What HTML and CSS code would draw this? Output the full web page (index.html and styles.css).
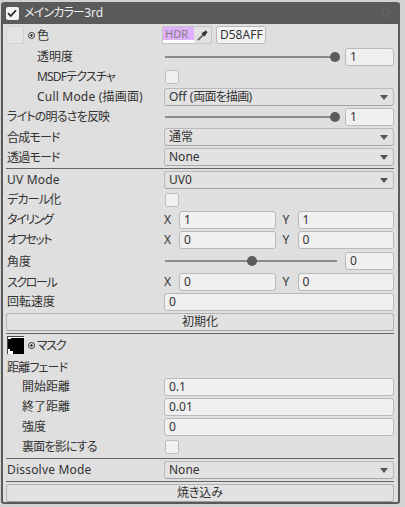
FILE: index.html
```html
<!DOCTYPE html>
<html lang="ja">
<head>
<meta charset="utf-8">
<title>メインカラー3rd</title>
<link rel="stylesheet" href="styles.css">
</head>
<body>
<section class="panel">
  <header class="head">
    <span class="check-on"><svg viewBox="0 0 12 12" width="12" height="12"><path d="M2 6.2 4.8 9 10 3.2" fill="none" stroke="#222" stroke-width="1.7"/></svg></span>
    <span class="head-title"><span class="t1">メインカラー</span>3rd</span>
    <svg class="gear" viewBox="0 0 12 12" width="12" height="12"><circle cx="6" cy="6" r="3.4" fill="none" stroke="#606060" stroke-width="2"/><path d="M6 0v2.4M6 9.6V12M0 6h2.4M9.600 6H12M1.800 1.800l1.700 1.700M8.500 8.500l1.700 1.700M1.800 10.200l1.700-1.700M8.500 3.500l1.700-1.700" stroke="#606060" stroke-width="1.400"/></svg>
  </header>
  <div class="body">
    <div class="row">
      <div class="label tex-label"><span class="swatch"></span><span class="dot"></span><span>色</span></div>
      <div class="ctrl color-ctrl">
        <div class="colorbox">
          <div class="hdr"><span class="hdr-text">HDR</span><span class="hdr-alpha"></span></div>
          <div class="dropper"><svg viewBox="0 0 14 14" width="13" height="13"><path d="M2 12 8 6" stroke="#666" stroke-width="2"/><path d="M7 4 10 7M8.500 5.500l3-3" stroke="#333" stroke-width="3"/></svg></div>
        </div>
        <div class="input hex">D58AFF</div>
      </div>
    </div>
    <div class="row gap-after-color">
      <div class="label ind2 up">透明度</div>
      <div class="ctrl slider"><div class="track"><span class="knob end"></span></div><div class="input num">1</div></div>
    </div>
    <div class="row"><div class="label ind2 up t1">MSDFテクスチャ</div><div class="ctrl"><span class="box"></span></div></div>
    <div class="row"><div class="label ind2 up wide">Cull Mode (描画面)</div><div class="ctrl"><div class="select">Off (<span class="t1">両面を描画</span>)<span class="arrow"></span></div></div></div>
    <div class="row">
      <div class="label up t1">ライトの明るさを反映</div>
      <div class="ctrl slider"><div class="track"><span class="knob end"></span></div><div class="input num">1</div></div>
    </div>
    <div class="row"><div class="label t1">合成モード</div><div class="ctrl"><div class="select">通常<span class="arrow"></span></div></div></div>
    <div class="row"><div class="label t1">透過モード</div><div class="ctrl"><div class="select">None<span class="arrow"></span></div></div></div>
    <hr class="sep">
    <div class="row"><div class="label up wide">UV Mode</div><div class="ctrl"><div class="select">UV0<span class="arrow"></span></div></div></div>
    <div class="row"><div class="label up t1">デカール化</div><div class="ctrl"><span class="box"></span></div></div>
    <div class="row">
      <div class="label up t2">タイリング</div>
      <div class="ctrl xy"><span class="axis">X</span><div class="input grow">1</div><span class="axis y">Y</span><div class="input grow">1</div></div>
    </div>
    <div class="row">
      <div class="label up t2">オフセット</div>
      <div class="ctrl xy"><span class="axis">X</span><div class="input grow">0</div><span class="axis y">Y</span><div class="input grow">0</div></div>
    </div>
    <div class="row extra1">
      <div class="label">角度</div>
      <div class="ctrl slider"><div class="track"><span class="knob mid"></span></div><div class="input num">0</div></div>
    </div>
    <div class="row extra1">
      <div class="label t2">スクロール</div>
      <div class="ctrl xy"><span class="axis">X</span><div class="input grow">0</div><span class="axis y">Y</span><div class="input grow">0</div></div>
    </div>
    <div class="row"><div class="label up">回転速度</div><div class="ctrl"><div class="input grow">0</div></div></div>
    <button class="btn" type="button">初期化</button>
    <hr class="sep">
    <div class="row">
      <div class="label tex-label"><svg class="mask" viewBox="0 0 17 18" width="17" height="18"><rect width="17" height="18" fill="#fff"/><path d="M0 3H4V2H17V18H6V15H3V13H0Z" fill="#000"/><path d="M0 0H17V1H0ZM0 0H1V18H0Z" fill="#444"/></svg><span class="dot"></span><span class="t2">マスク</span></div>
    </div>
    <div class="row extra2"><div class="label t1">距離フェード</div></div>
    <div class="row"><div class="label ind1 up">開始距離</div><div class="ctrl"><div class="input grow">0.1</div></div></div>
    <div class="row"><div class="label ind1 up">終了距離</div><div class="ctrl"><div class="input grow">0.01</div></div></div>
    <div class="row"><div class="label ind1 up">強度</div><div class="ctrl"><div class="input grow">0</div></div></div>
    <div class="row"><div class="label ind1 up t1">裏面を影にする</div><div class="ctrl"><span class="box"></span></div></div>
    <hr class="sep">
    <div class="row"><div class="label up wide">Dissolve Mode</div><div class="ctrl"><div class="select">None<span class="arrow"></span></div></div></div>
    <hr class="sep">
    <button class="btn" type="button">焼き込み</button>
  </div>
</section>
</body>
</html>
```
FILE: styles.css
```css
* { box-sizing: border-box; }
html, body { margin: 0; padding: 0; }
body {
  width: 405px;
  height: 507px;
  background: #d2d2d2;
  padding: 2px 0 0 1px;
  font: 12px/18px "Noto Sans", "Noto Sans CJK JP", sans-serif;
  font-feature-settings: "palt";
  color: #333;
  overflow: hidden;
}
.panel {
  width: 399px;
  height: 502px;
  border: 2px solid #5a5a5a;
  border-top: 0;
  border-radius: 3px;
  background: #dfdfdf;
  display: flex;
  flex-direction: column;
  overflow: hidden;
}
.head {
  height: 22px;
  flex: none;
  background: #5a5a5a;
  color: #eee;
  display: flex;
  align-items: center;
  padding: 0 6px 0 3px;
  gap: 5px;
}
.check-on {
  width: 13px;
  height: 13px;
  background: #f4f4f4;
  border-radius: 2px;
  display: flex;
}
.head-title { flex: 1; }
.body {
  padding: 2px 4px 0 3px;
  display: flex;
  flex-direction: column;
  gap: 2px;
}
.row { height: 18px; display: flex; flex: none; }
.gap-after-color { margin-top: 2px; }
.extra1 { margin-top: 1px; }
.extra2 { margin-top: 2px; }
.label { width: 158px; flex: none; padding-left: 1px; white-space: nowrap; line-height: 19px; }
.label.up { line-height: 18px; }
.ind1 { padding-left: 16px; }
.ind2 { padding-left: 31px; }
.t1 { letter-spacing: -0.8px; }
.t2 { letter-spacing: -1.4px; }
.wide { letter-spacing: 0.2px; }
.tex-label { padding-left: 0; display: flex; align-items: center; }
.swatch {
  width: 18px;
  height: 18px;
  background: #e3e3e3;
  border: 1px solid #d2d2d2;
  margin: 0 4px 0 0;
}
.mask { margin: 0 4px 0 1px; }
.dot {
  width: 7px;
  height: 7px;
  border: 1px solid #333;
  border-radius: 50%;
  margin-right: 2px;
  background: radial-gradient(circle, #333 0 1px, transparent 1.2px);
}
.ctrl { flex: 1; display: flex; align-items: center; min-width: 0; }
.color-ctrl { gap: 4px; margin-left: -2px; }
.colorbox {
  width: 50px;
  height: 18px;
  border: 1px solid #c4c4c4;
  border-radius: 2px;
  display: flex;
  background: #e2e2e2;
  overflow: hidden;
}
.hdr { width: 31px; display: flex; flex-direction: column; }
.hdr-text {
  height: 13px;
  background: #e0b0ff;
  color: #808080;
  font-size: 11px;
  line-height: 14px;
  padding-left: 2px;
}
.hdr-alpha { height: 3px; background: #fff; }
.dropper { flex: 1; display: flex; align-items: center; justify-content: center; }
.input {
  height: 18px;
  background: #f0f0f0;
  border: 1px solid #b9b9b9;
  border-radius: 3px;
  padding-left: 4px;
  line-height: 16px;
  min-width: 0;
}
.hex { width: 50px; padding-left: 3px; background: #f3f3f3; }
.num { width: 49px; flex: none; margin-left: 8px; }
.grow { flex: 1; }
.box {
  width: 14px;
  height: 14px;
  background: #f0f0f0;
  border: 1px solid #bdbdbd;
  border-radius: 2px;
  margin-left: 1px;
}
.select {
  flex: 1;
  height: 18px;
  background: #e2e2e2;
  border: 1px solid #b9b9b9;
  border-bottom-color: #a4a4a4;
  border-radius: 3px;
  padding-left: 4px;
  line-height: 16px;
  position: relative;
}
.arrow {
  position: absolute;
  right: 5px;
  top: 6px;
  border: 4px solid transparent;
  border-top: 5px solid #555;
  border-bottom: 0;
}
.slider { gap: 0; }
.track {
  flex: 1;
  height: 2px;
  background: #8a8a8a;
  position: relative;
  margin-left: 1px;
}
.knob {
  position: absolute;
  top: -4px;
  width: 10px;
  height: 10px;
  border-radius: 50%;
  background: #5c5c5c;
}
.knob.end { right: -3px; }
.knob.mid { left: 82px; }
.axis { width: 15px; flex: none; padding-left: 0; }
.axis.y { width: 22px; padding-left: 7px; }
.btn {
  height: 18px;
  flex: none;
  padding: 0;
  background: #e2e2e2;
  border: 1px solid #b4b4b4;
  border-bottom-color: #a0a0a0;
  border-radius: 3px;
  font: inherit;
  line-height: 16px;
  color: inherit;
  text-align: center;
}
.sep {
  height: 1px;
  flex: none;
  margin: 0;
  border: 0;
  background: #666;
}
```
